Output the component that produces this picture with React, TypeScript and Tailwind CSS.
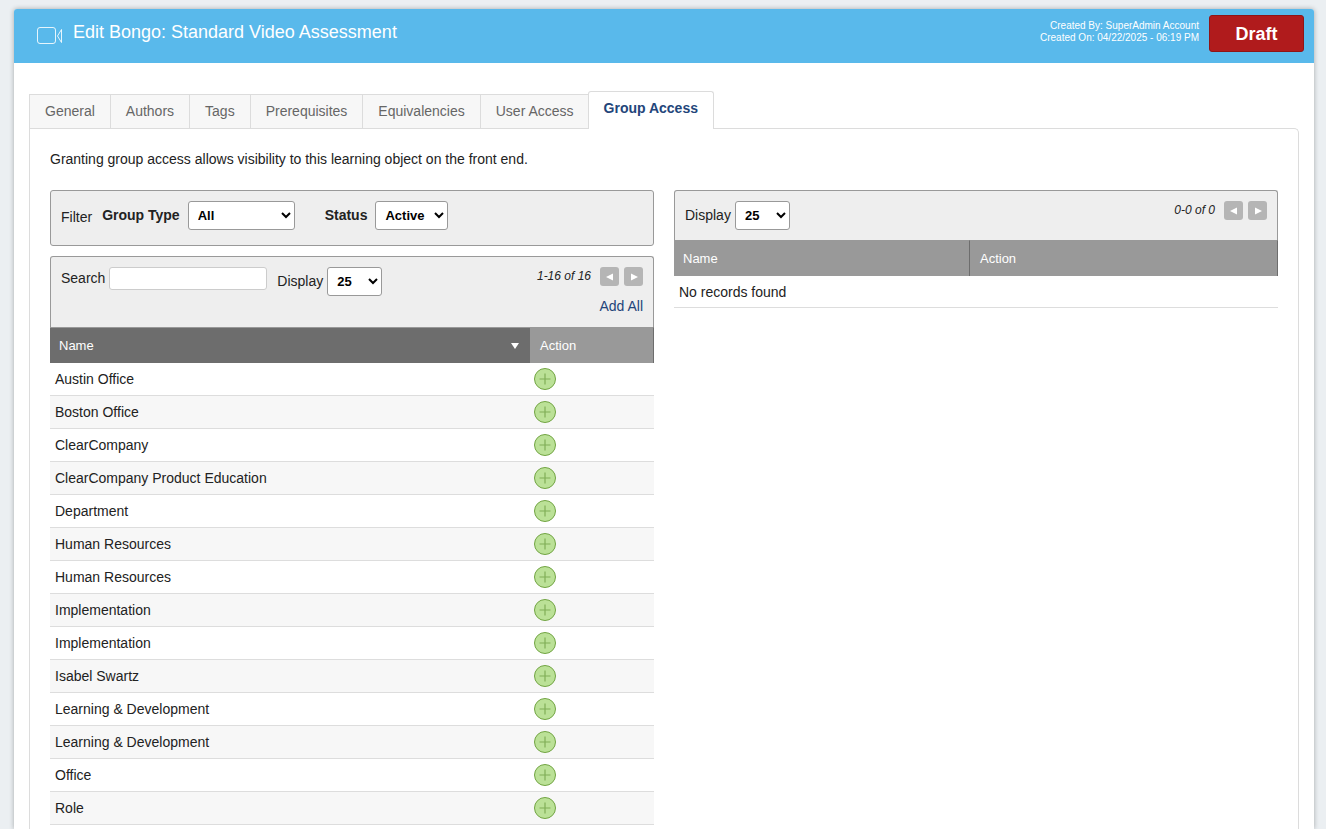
import React from 'react';
import clsx from 'clsx';

const tabs = ['General', 'Authors', 'Tags', 'Prerequisites', 'Equivalencies', 'User Access', 'Group Access'];

const groups = [
  'Austin Office',
  'Boston Office',
  'ClearCompany',
  'ClearCompany Product Education',
  'Department',
  'Human Resources',
  'Human Resources',
  'Implementation',
  'Implementation',
  'Isabel Swartz',
  'Learning & Development',
  'Learning & Development',
  'Office',
  'Role',
];

const selectClass = 'h-[29px] rounded-[3px] border border-[#999] bg-white pl-[5px] text-[13px] font-bold text-black';

const VideoIcon = () => (
  <svg width="26" height="18" viewBox="0 0 26 18" fill="none" stroke="white" strokeOpacity="0.85" aria-hidden="true">
    <rect x="0.5" y="0.5" width="18" height="16" rx="2.5" />
    <path d="M24.5 2.5v13l-4-6.5z" />
  </svg>
);

const AddIcon = () => (
  <svg width="22" height="22" viewBox="0 0 22 22" fill="none" aria-hidden="true">
    <circle cx="11" cy="11" r="10.5" fill="#bbe197" stroke="#71a442" />
    <path d="M11 5.5v11M5.5 11h11" stroke="#80ae57" strokeWidth="1.2" />
  </svg>
);

const Pager = ({ range }: { range: string }) => (
  <div className="flex items-center gap-[5px] leading-[19px]">
    <span className="mr-1 text-[12px] italic">{range}</span>
    <button type="button" aria-label="Previous page" className="flex size-[19px] items-center justify-center rounded-[3px] bg-[#b5b5b5]">
      <svg width="8" height="8" viewBox="0 0 8 8" fill="white"><path d="M7 0.5v7L0 4z" /></svg>
    </button>
    <button type="button" aria-label="Next page" className="flex size-[19px] items-center justify-center rounded-[3px] bg-[#b5b5b5]">
      <svg width="8" height="8" viewBox="0 0 8 8" fill="white"><path d="M1 0.5v7l7-3.5z" /></svg>
    </button>
  </div>
);

const DisplaySelect = ({ id }: { id: string }) => (
  <div className="flex items-start gap-1">
    <label htmlFor={id} className="mt-1">Display</label>
    <select id={id} className={clsx(selectClass, 'w-[55px]')} defaultValue="25">
      <option>10</option>
      <option>25</option>
      <option>50</option>
    </select>
  </div>
);

const Header = () => (
  <header className="flex h-[54px] items-start rounded-t-[3px] bg-[#59b9eb] pt-[6px] pr-[10px] pl-[23px] text-white">
    <div className="mt-3">
      <VideoIcon />
    </div>
    <h1 className="ml-[10px] mt-[5px] text-[18px] leading-6">Edit Bongo: Standard Video Assessment</h1>
    <p className="ml-auto mt-[5px] text-right text-[10px] leading-3">
      Created By: SuperAdmin Account
      <br />
      Created On: 04/22/2025 - 06:19 PM
    </p>
    <button type="button" className="ml-[10px] h-[37px] w-[95px] rounded-[3px] border border-[#8f1517] bg-[#b01b1c] text-[18px] font-bold">
      Draft
    </button>
  </header>
);

const Tabs = () => {
  const [active, setActive] = React.useState('Group Access');

  return (
    <nav role="tablist" className="flex h-[37px] items-end">
      {tabs.map((tab) => (
        <button
          key={tab}
          type="button"
          role="tab"
          aria-selected={tab === active}
          onClick={() => setActive(tab)}
          className={clsx(
            'border-[#dcdcdc] text-[14px]',
            tab === active
              ? 'z-10 -mb-px -ml-px h-[38px] rounded-t-[3px] border border-b-0 bg-white px-[15px] pb-[6px] font-bold text-[#23457a]'
              : 'h-[34px] border-t border-l bg-[#f7f7f7] px-[15px] pb-[2px] text-[#666]',
          )}
        >
          {tab}
        </button>
      ))}
    </nav>
  );
};

const AvailableGroups = () => (
  <section>
    <div className="flex h-14 items-start rounded-[3px] border border-[#999] bg-[#eee] px-[10px] pt-[10px]">
      <span className="mt-[6px]">Filter</span>
      <label htmlFor="groupType" className="mt-1 ml-[10px] font-bold">Group Type</label>
      <select id="groupType" className={clsx(selectClass, 'ml-2 w-[107px]')}>
        <option>All</option>
      </select>
      <label htmlFor="status" className="mt-1 ml-[30px] font-bold">Status</label>
      <select id="status" className={clsx(selectClass, 'ml-2 w-[73px]')}>
        <option>Active</option>
        <option>Inactive</option>
      </select>
    </div>

    <div className="mt-[10px] flex h-[71px] items-start rounded-t-[3px] border border-b-0 border-[#999] bg-[#eee] px-[10px] pt-[10px]">
      <label htmlFor="search" className="mt-px">Search</label>
      <input id="search" type="text" className="mr-[10px] ml-1 h-[23px] w-[158px] rounded-[3px] border border-[#ccc] bg-white px-1" />
      <DisplaySelect id="displayAvailable" />
      <div className="ml-auto flex flex-col items-end">
        <Pager range="1-16 of 16" />
        <a href="#add-all" className="mt-[10px] text-[#23457a]">Add All</a>
      </div>
    </div>

    <table className="w-full table-fixed border-separate border-spacing-0 text-left">
      <thead>
        <tr className="h-9 text-[13px] text-white">
          <th className="border-t border-[#999] bg-[#6d6d6d] px-[9px] font-normal">
            <div className="flex items-center justify-between">
              Name
              <svg width="10" height="7" viewBox="0 0 10 7" fill="white" aria-hidden="true"><path d="M0 1h8L4 7z" /></svg>
            </div>
          </th>
          <th className="w-[124px] border-t border-r border-t-[#999] border-r-[#6d6d6d] bg-[#999] px-[10px] font-normal">Action</th>
        </tr>
      </thead>
      <tbody>
        {groups.map((group, index) => (
          <tr key={index} className="h-[33px] even:bg-[#f7f7f7]">
            <td className="border-b border-[#ddd] px-[5px]">{group}</td>
            <td className="border-b border-[#ddd] px-1">
              <button type="button" aria-label={`Add ${group}`} className="block">
                <AddIcon />
              </button>
            </td>
          </tr>
        ))}
      </tbody>
    </table>
  </section>
);

const AssignedGroups = () => (
  <section>
    <div className="flex h-[50px] items-start justify-between rounded-t-[3px] border border-b-0 border-[#999] bg-[#eee] px-[10px] pt-[10px]">
      <DisplaySelect id="displayAssigned" />
      <Pager range="0-0 of 0" />
    </div>
    <table className="w-full table-fixed border-separate border-spacing-0 text-left">
      <thead>
        <tr className="h-9 bg-[#999] text-[13px] text-white">
          <th className="border-t border-r border-t-[#999] border-r-[#6d6d6d] px-[9px] font-normal">Name</th>
          <th className="w-[51%] border-t border-r border-t-[#999] border-r-[#6d6d6d] px-[10px] font-normal">Action</th>
        </tr>
      </thead>
      <tbody>
        <tr className="h-8">
          <td colSpan={2} className="border-b border-[#ddd] px-[5px]">No records found</td>
        </tr>
      </tbody>
    </table>
  </section>
);

const App = () => (
  <div className="flex min-h-screen flex-col bg-[#ebeff2] pt-[9px] pr-3 pl-[14px] font-['Liberation_Sans',Arial,sans-serif] text-[14px] leading-5 text-[#222]">
    <main className="flex grow flex-col rounded-t-[3px] bg-white shadow-[0_0_5px_rgba(0,0,0,0.3)]">
      <Header />
      <div className="flex grow flex-col px-[15px] pt-7">
        <Tabs />
        <div className="grow rounded-tr-[5px] border border-b-0 border-[#dcdcdc] px-5 pt-5">
          <p>Granting group access allows visibility to this learning object on the front end.</p>
          <div className="mt-[21px] grid grid-cols-2 items-start gap-5">
            <AvailableGroups />
            <AssignedGroups />
          </div>
        </div>
      </div>
    </main>
  </div>
);

export default App;
